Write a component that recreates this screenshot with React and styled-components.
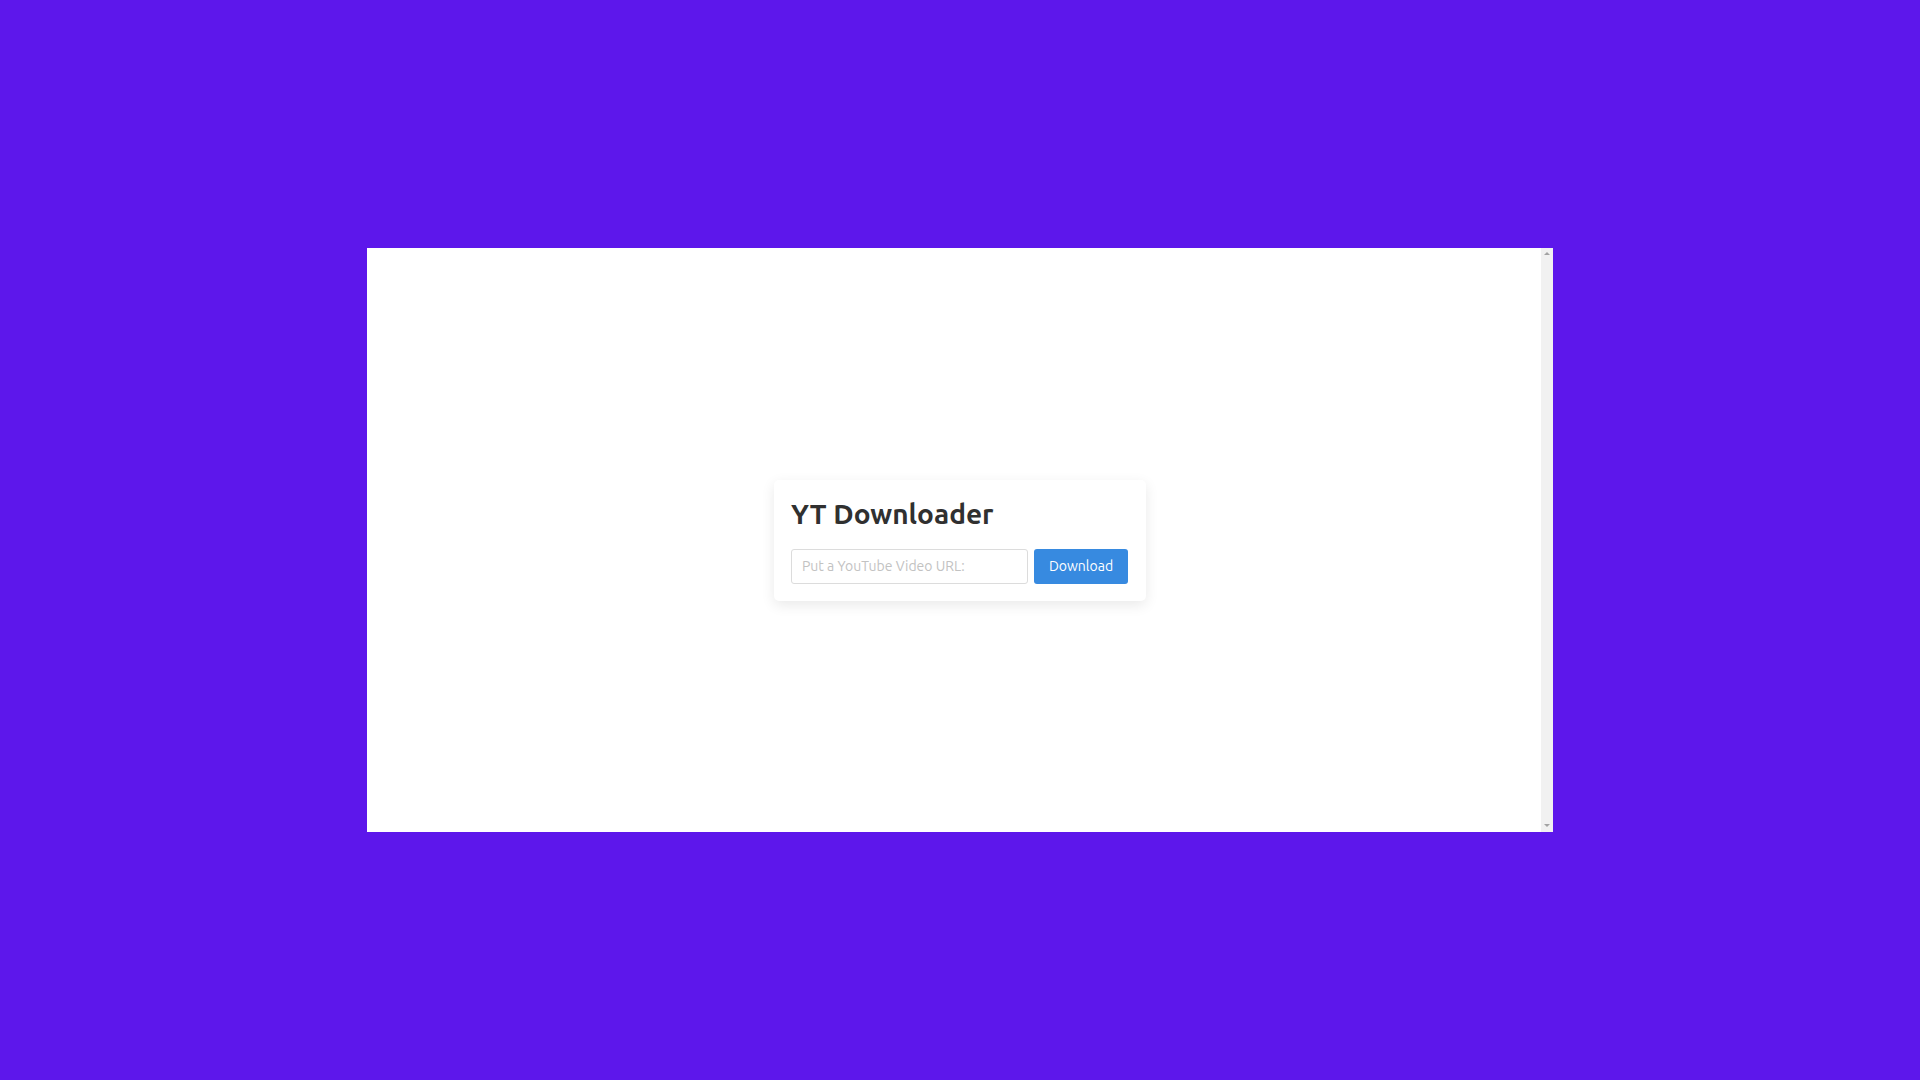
import styled, { createGlobalStyle } from 'styled-components';

const GlobalStyle = createGlobalStyle`
  html, body {
    margin: 0;
    padding: 0;
    height: 100%;
  }
  body {
    background: #5d17eb;
    font-family: Ubuntu, "Noto Sans", "DejaVu Sans", sans-serif;
  }
  #root {
    height: 100%;
  }
`;

const Page = styled.div`
  width: 100%;
  height: 100vh;
  display: flex;
  align-items: center;
  justify-content: center;
`;

const Frame = styled.div`
  position: relative;
  width: 1186px;
  height: 584px;
  background: #ffffff;
  display: flex;
  align-items: center;
  justify-content: center;
`;

const Scrollbar = styled.div`
  position: absolute;
  top: 0;
  right: 0;
  bottom: 0;
  width: 12px;
  background: #f1f1f1;
  display: flex;
  flex-direction: column;
  justify-content: space-between;
  align-items: center;
  padding: 4px 0 5px;
  box-sizing: border-box;
`;

const Arrow = styled.span`
  width: 0;
  height: 0;
  border-left: 3px solid transparent;
  border-right: 3px solid transparent;
  ${(p) =>
    p.$down
      ? 'border-top: 3px solid #a3a3a3;'
      : 'border-bottom: 3px solid #a3a3a3;'}
`;

const Card = styled.div`
  width: 372px;
  box-sizing: border-box;
  padding: 15px 18px 17px 17px;
  background: #fff;
  border-radius: 5px;
  box-shadow: 0 4px 14px rgba(0, 0, 0, 0.09);
`;

const Title = styled.h1`
  margin: 0 0 16px;
  font-size: 28px;
  line-height: 38px;
  font-weight: 700;
  color: #303030;
`;

const Row = styled.form`
  display: flex;
  gap: 6px;
`;

const UrlInput = styled.input`
  width: 237px;
  height: 35px;
  box-sizing: border-box;
  padding: 0 10px;
  border: 1px solid #dcdcdc;
  border-radius: 3px;
  font-family: inherit;
  font-size: 14px;
  color: #333;
  outline: none;

  &::placeholder {
    color: #c2c2c2;
  }
`;

const Button = styled.button`
  width: 94px;
  height: 35px;
  border: none;
  border-radius: 3px;
  background: #378ae0;
  color: #fff;
  font-family: inherit;
  font-size: 14px;
  cursor: pointer;
`;

export default function App() {
  return (
    <>
      <GlobalStyle />
      <Page>
        <Frame>
          <Card>
            <Title>YT Downloader</Title>
            <Row onSubmit={(e) => e.preventDefault()}>
              <UrlInput placeholder="Put a YouTube Video URL:" />
              <Button type="submit">Download</Button>
            </Row>
          </Card>
          <Scrollbar>
            <Arrow />
            <Arrow $down />
          </Scrollbar>
        </Frame>
      </Page>
    </>
  );
}
